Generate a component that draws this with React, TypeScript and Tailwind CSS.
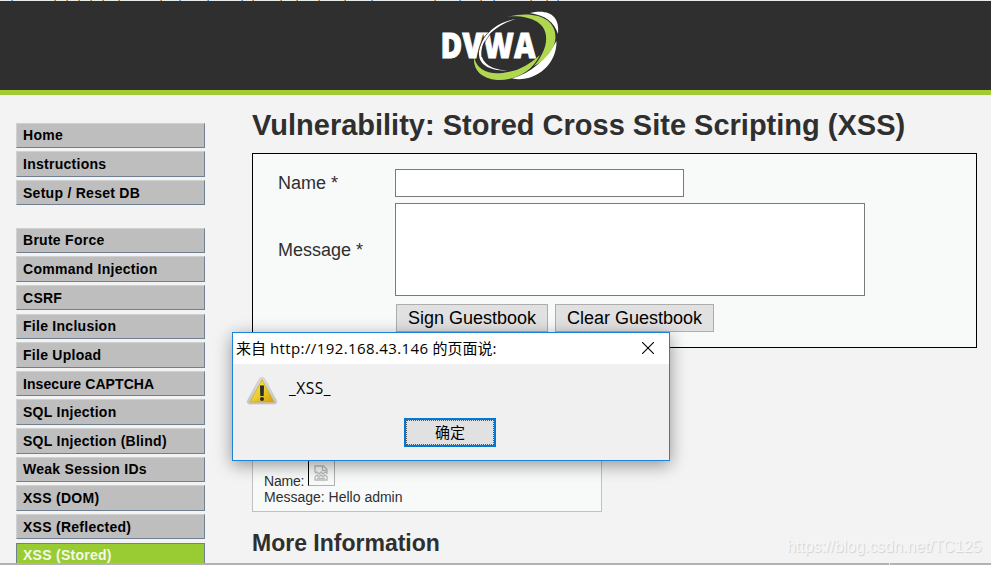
import React from "react";

const primary = ["Home", "Instructions", "Setup / Reset DB"];
const attacks = [
  "Brute Force",
  "Command Injection",
  "CSRF",
  "File Inclusion",
  "File Upload",
  "Insecure CAPTCHA",
  "SQL Injection",
  "SQL Injection (Blind)",
  "Weak Session IDs",
  "XSS (DOM)",
  "XSS (Reflected)",
  "XSS (Stored)",
];

const stripMarks = [12, 55, 67, 79, 91, 103, 119, 161, 180, 208, 242, 253, 281, 297, 319, 345, 372, 435, 460, 481, 494, 531, 547, 558];

function MenuItem({ label }: { label: string }) {
  const active = label === "XSS (Stored)";
  const spacing = label === "Insecure CAPTCHA" ? "tracking-[0.08px]" : "tracking-[0.27px]";
  return (
    <li
      className={
        "flex h-[25.45px] items-center border pt-px pl-[6px] text-[14px] font-bold whitespace-nowrap " +
        spacing +
        " " +
        (active
          ? "border-[#708090] bg-[#99cc33] text-[#f4f8e8]"
          : "border-t-[#d0d0d0] border-l-[#d0d0d0] border-r-[#708090] border-b-[#708090] bg-[#bebebe] text-black")
      }
    >
      {label}
    </li>
  );
}

function Menu({ items }: { items: string[] }) {
  return (
    <ul className="flex flex-col gap-[3.21px]">
      {items.map((item) => (
        <MenuItem key={item} label={item} />
      ))}
    </ul>
  );
}

function Logo() {
  return (
    <svg className="h-[89px] w-[160px]" viewBox="0 1 160 89">
      <path d="M96 19C72 23 59 40 59 54C59 65 70 71 88 70.500C73 70 61.500 64 61.500 53C61.500 38 76 25 96 19Z" fill="#fff" />
      <path d="M110 13C130 8.500 140 17 138 34C134 22 126 15.500 110 13Z" fill="#fff" />
      <path d="M136.500 41C137 67 112 83 92 78.500C111 73 126 60 136.500 41Z" fill="#fff" />
      <path d="M88 16.500C117 10 135.500 19 135.500 37C135.500 48 126 60 114 66C123 55 127 45 126 36C125 23 111 15 88 16.500Z" fill="#b0d750" />
      <path d="M54 57C57 71 71 76 88 72C101 70 111 63 120 55C112 72 94 81 77 80C61 78 53 70 54 57Z" fill="#b0d750" />
      <text
        x="20.500"
        y="58"
        textLength="95"
        lengthAdjust="spacingAndGlyphs"
        fill="#fff"
        stroke="#fff"
        strokeWidth="0.800"
        className="font-['Open_Sans',sans-serif] text-[36px] font-extrabold"
      >
        DVWA
      </text>
      <path d="M57.500 57C59 45 63 37 70 31" fill="none" stroke="#2f2f2f" strokeWidth="0.800" />
      <path d="M61.500 57C62 47 65 40 72 32" fill="none" stroke="#2f2f2f" strokeWidth="0.600" />
    </svg>
  );
}

function WarningIcon() {
  return (
    <svg className="h-[30px] w-[32px] shrink-0" viewBox="0 0 32 30">
      <defs>
        <linearGradient id="rim" x1="0" y1="0" x2="0" y2="1">
          <stop offset="0" stopColor="#dedede" />
          <stop offset="1" stopColor="#c2c4c8" />
        </linearGradient>
        <linearGradient id="face" x1="0" y1="0" x2="1" y2="1">
          <stop offset="0" stopColor="#f7f04a" />
          <stop offset="0.500" stopColor="#ecd02b" />
          <stop offset="1" stopColor="#d99a08" />
        </linearGradient>
      </defs>
      <path d="M13.500 1.500Q16 -1.500 18.500 1.500L30.500 23.500Q31.500 27 28 27H4Q0.500 27 1.500 23.500Z" fill="url(#rim)" stroke="#c0c0c2" strokeWidth="0.600" />
      <path d="M16 2.500L28 25H4Z" fill="url(#face)" stroke="#cfa71b" strokeWidth="0.700" strokeLinejoin="round" />
      <path d="M14 8.500H18L17.700 19H14.300Z" fill="#292c30" />
      <circle cx="16" cy="22" r="2" fill="#292c30" />
    </svg>
  );
}

function BrokenImage() {
  return (
    <span className="inline-flex h-[27px] w-[27px] items-center justify-center border border-t-black border-l-black border-r-[#b0b0b0] border-b-[#b0b0b0] pr-[2px]">
      <svg className="h-[18px] w-[16px]" viewBox="0 0 16 18" fill="none" stroke="#bcbcbc" strokeWidth="1.400">
        <path d="M2 8.500V2H10.500L14 5.500V9L12 8L10 10L8 8L6 10L4 8L2 9" />
        <path d="M9.500 2V6.500H14" />
        <path d="M2 16V13L4 11L6 13L8 11L10 13L12 11L14 12.500V16Z" />
        <path d="M4 14.500H12" />
      </svg>
    </span>
  );
}

function AlertDialog() {
  return (
    <div className="absolute top-[332px] left-[232px] flex h-[129px] w-[438px] flex-col border border-[#1a83d8] bg-[#f0f0f0] font-['Open_Sans','Noto_Sans_CJK_SC',sans-serif] text-black shadow-[0_4px_16px_rgba(0,0,0,0.4)]">
      <div className="flex h-[31px] shrink-0 items-center justify-between bg-white pr-[15px] pl-[3px]">
        <span className="pb-[2px] text-[15px] leading-[20px] whitespace-nowrap">
          来自 <span className="tracking-[0.4px]">http://192.168.43.146</span> 的页面说:
        </span>
        <svg className="mb-px h-[12px] w-[12px]" viewBox="0 0 12 12" stroke="#000" strokeWidth="1.100">
          <path d="M0 0L12 12M12 0L0 12" />
        </svg>
      </div>
      <div className="flex pt-[13px] pl-[13px]">
        <WarningIcon />
        <span className="-mt-px pl-[11px] text-[15.5px] leading-[24px] tracking-[0.5px]">_XSS_</span>
      </div>
      <button className="mt-[11px] ml-[171px] h-[29px] w-[92px] shrink-0 border-2 border-[#0078d7] bg-[#e1e1e1]">
        <span className="flex h-full items-center justify-center border border-dotted border-[#555] pb-[2px] text-[15px] leading-[20px]">确定</span>
      </button>
    </div>
  );
}

export default function App() {
  return (
    <div className="relative flex h-[565px] w-[991px] flex-col overflow-hidden bg-[#f3f3f3] font-['Liberation_Sans',Arial,sans-serif] text-[#2f2f2f]">
      <svg className="block h-px w-full shrink-0 bg-[#e8ecea]" viewBox="0 0 991 1">
        {stripMarks.map((x) => (
          <g key={x}>
            <rect x={x - 1} y="0" width="1" height="1" fill="#dfa45c" />
            <rect x={x} y="0" width="1" height="1" fill="#4d93c7" />
          </g>
        ))}
      </svg>
      <header className="flex h-[94px] shrink-0 justify-center border-b-[5px] border-[#a1cc33] bg-[#2f2f2f] pl-[9px]">
        <Logo />
      </header>
      <div className="flex h-[468px] shrink-0 overflow-hidden">
        <nav className="ml-[16px] flex w-[189px] shrink-0 flex-col gap-[22.23px] pt-[27.7px]">
          <Menu items={primary} />
          <Menu items={attacks} />
        </nav>
        <main className="ml-[47px] w-[725px] shrink-0 pt-[11px]">
          <h1 className="h-[47px] text-[29px] leading-[38px] font-bold whitespace-nowrap">
            Vulnerability: Stored Cross Site Scripting (XSS)
          </h1>
          <form className="flex h-[195px] flex-col border border-black bg-[#f8fafa] pt-[15px] pl-[25px] text-[18px]">
            <div className="flex h-[28px] items-center">
              <label className="w-[117px]">Name *</label>
              <div className="h-[28px] w-[289px] border border-[#7a7a7a] bg-white" />
            </div>
            <div className="mt-[6px] flex h-[93px] items-center">
              <label className="w-[117px] pt-[2px]">Message *</label>
              <div className="h-[93px] w-[470px] border border-[#7a7a7a] bg-white" />
            </div>
            <div className="mt-[8px] ml-[118px] flex gap-[7px] text-black">
              <button type="button" className="h-[28px] w-[152px] border border-[#adadad] bg-[#e1e1e1] leading-[26px] whitespace-nowrap">
                Sign Guestbook
              </button>
              <button type="button" className="h-[28px] w-[159px] border border-[#adadad] bg-[#e1e1e1] leading-[26px] whitespace-nowrap">
                Clear Guestbook
              </button>
            </div>
          </form>
          <section className="mt-[102px] h-[62px] w-[350px] border border-[#c0c0c0] bg-[#f8fafa] pt-[6px] pl-[11px] text-[14px] leading-[16px]">
            <div className="flex h-[29px] items-end">
              <span className="-mb-[3px] w-[44px] tracking-[-0.2px]">Name:</span>
              <BrokenImage />
            </div>
            <div className="mt-[3px]">Message: Hello admin</div>
          </section>
          <h2 className="pt-[15px] text-[23px] leading-[32px] font-bold">More Information</h2>
        </main>
      </div>
      <div className="flex h-[2px] shrink-0 bg-[#b2b2b2]">
        <div className="ml-[889px] w-px bg-[#e5e5e5]" />
      </div>
      <AlertDialog />
      <div className="absolute top-[538px] left-[787px] text-[15.9px] leading-[18px] whitespace-nowrap text-[#f7f7f7] [text-shadow:1px_1px_1px_#d0d0d0]">
        https://blog.csdn.net/TC125
      </div>
    </div>
  );
}
